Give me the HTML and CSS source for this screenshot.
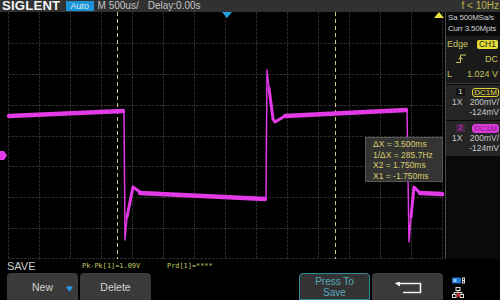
FILE: index.html
```html
<!DOCTYPE html>
<html>
<head>
<meta charset="utf-8">
<link rel="stylesheet" href="styles.css">
</head>
<body>
<div class="screen">
  <header class="topbar">
    <span class="logo">SIGLENT</span>
    <span class="mode">Auto</span>
    <span class="tb">M 500us/</span>
    <span class="tb delay">Delay:0.00s</span>
    <span class="freq">f &lt; 10Hz</span>
  </header>
  <div class="main">
    <div class="plot">
      <svg class="grid" width="445" height="247" viewBox="0 0 445 247">
        <g stroke="#2a2a2a" stroke-width="1" stroke-dasharray="3 1">
          <line x1="8.5" y1="0" x2="8.5" y2="247"/>
          <line x1="39.5" y1="0" x2="39.5" y2="247"/>
          <line x1="70.5" y1="0" x2="70.5" y2="247"/>
          <line x1="101.5" y1="0" x2="101.5" y2="247"/>
          <line x1="132.5" y1="0" x2="132.5" y2="247"/>
          <line x1="163.5" y1="0" x2="163.5" y2="247"/>
          <line x1="194.5" y1="0" x2="194.5" y2="247"/>
          <line x1="225.5" y1="0" x2="225.5" y2="247"/>
          <line x1="256.5" y1="0" x2="256.5" y2="247"/>
          <line x1="287.5" y1="0" x2="287.5" y2="247"/>
          <line x1="318.5" y1="0" x2="318.5" y2="247"/>
          <line x1="349.5" y1="0" x2="349.5" y2="247"/>
          <line x1="380.5" y1="0" x2="380.5" y2="247"/>
          <line x1="411.5" y1="0" x2="411.5" y2="247"/>
          <line x1="442.5" y1="0" x2="442.5" y2="247"/>
          <line x1="8" y1="31.5" x2="443" y2="31.5"/>
          <line x1="8" y1="62.5" x2="443" y2="62.5"/>
          <line x1="8" y1="93.5" x2="443" y2="93.5"/>
          <line x1="8" y1="124.5" x2="443" y2="124.5"/>
          <line x1="8" y1="154.5" x2="443" y2="154.5"/>
          <line x1="8" y1="185.5" x2="443" y2="185.5"/>
          <line x1="8" y1="216.5" x2="443" y2="216.5"/>
          <line x1="8" y1="246.5" x2="443" y2="246.5"/>
        </g>
        <g stroke="#c9c98a" stroke-width="1" stroke-dasharray="4 3">
          <line x1="117.5" y1="0" x2="117.5" y2="247"/>
          <line x1="335.5" y1="0" x2="335.5" y2="247"/>
        </g>
        <g fill="none" stroke="#e23ae6" stroke-linejoin="round" stroke-linecap="round">
          <line x1="9" y1="104" x2="123" y2="99" stroke-width="4.5"/>
          <path d="M124 99 L125 228 L127 205" stroke-width="1.5"/>
          <path d="M127 205 L133 175 L140 180" stroke-width="3"/>
          <line x1="140" y1="181" x2="265" y2="187" stroke-width="4.5"/>
          <path d="M266 187 L267 58 L269 76" stroke-width="1.5"/>
          <path d="M269 76 L273 107 L275 110 L285 104" stroke-width="3"/>
          <line x1="285" y1="104" x2="406" y2="98" stroke-width="4.5"/>
          <path d="M407 98 L409 230 L411 205" stroke-width="1.5"/>
          <path d="M411 205 L414 175 L420 181" stroke-width="3"/>
          <line x1="420" y1="181" x2="442" y2="182" stroke-width="4.5"/>
        </g>
        <polygon points="222,0 232,0 227,6" fill="#22a2e4"/>
        <polygon points="434,6 444,6 439,0" fill="#e8e23a"/>
        <polygon points="0,139 4,139 7,143.5 4,148 0,148" fill="#e23ae6"/>
        <rect x="440" y="182" width="4" height="2" fill="#e23ae6"/>
      </svg>
      <div class="cursor-box">
        <div>&Delta;X = 3.500ms</div>
        <div>1/&Delta;X = 285.7Hz</div>
        <div>X2 = 1.750ms</div>
        <div>X1 = -1.750ms</div>
      </div>
    </div>
    <aside class="panel">
      <div class="acq">
        <div>Sa 500MSa/s</div>
        <div>Curr 3.50Mpts</div>
      </div>
      <div class="trig">
        <div class="trow"><span>Edge</span><span class="ch1tag">CH1</span></div>
        <div class="trow">
          <svg class="slope" width="11" height="9" viewBox="0 0 11 9"><path d="M0 8.5 H4.5 V1 H10" fill="none" stroke="#cfc960" stroke-width="1"/><path d="M2.5 5.5 L4.5 3 L6.5 5.5" fill="none" stroke="#cfc960" stroke-width="1"/></svg>
          <span>DC</span>
        </div>
        <div class="trow"><span>L</span><span>1.024 V</span></div>
      </div>
      <div class="chan ch1">
        <div class="crow1"><span class="cnum">1</span><span class="cpl">DC1M</span></div>
        <div class="crow"><span>1X</span><span>200mV/</span></div>
        <div class="crow right"><span>-124mV</span></div>
      </div>
      <div class="chan ch2">
        <div class="crow1"><span class="cnum">2</span><span class="cpl">DC1M</span></div>
        <div class="crow"><span>1X</span><span>200mV/</span></div>
        <div class="crow right"><span>-124mV</span></div>
      </div>
    </aside>
  </div>
  <footer class="bottom">
    <div class="meas">
      <span class="menu-title">SAVE</span>
      <span class="mval pk">Pk-Pk[1]=1.09V</span>
      <span class="mval prd">Prd[1]=****</span>
    </div>
    <div class="buttons">
      <div class="btn new">New
        <svg class="knob" width="7" height="6" viewBox="0 0 7 6"><polygon points="0,1 7,1 3.5,6" fill="#2792e0"/><rect x="1.5" y="0" width="4" height="2" fill="#2792e0"/></svg>
      </div>
      <div class="btn">Delete</div>
      <div class="slot"></div>
      <div class="slot"></div>
      <div class="btn save">Press To<br>Save</div>
      <div class="btn back">
        <svg width="28" height="12" viewBox="0 0 28 12"><path d="M5 1.5 H26.5 V10.5 H9" fill="none" stroke="#f0f0f0" stroke-width="1.6"/><polygon points="1,1.5 6,-1.5 6,4.5" fill="#f0f0f0"/></svg>
      </div>
      <div class="status">
        <svg width="14" height="7" viewBox="0 0 14 7"><rect x="0" y="0.5" width="9" height="6" rx="1" fill="#1e78d8"/><rect x="1.5" y="2" width="3" height="3" fill="#9cc8f0"/><rect x="10" y="0.5" width="3" height="6" fill="#ddd"/><rect x="11" y="1.5" width="1" height="1.5" fill="#111"/><rect x="11" y="4" width="1" height="1.5" fill="#111"/></svg>
        <svg width="12" height="11" viewBox="0 0 12 11"><rect x="4" y="0.5" width="4" height="3" fill="none" stroke="#ddd" stroke-width="1"/><path d="M6 3.5 V5.5 M2 5.5 H10 M2 5.5 V7 M10 5.5 V7" stroke="#ddd" stroke-width="1" fill="none"/><rect x="0.5" y="7.5" width="3.5" height="3" fill="none" stroke="#ddd" stroke-width="1"/><rect x="8" y="7.5" width="3.5" height="3" fill="none" stroke="#ddd" stroke-width="1"/><path d="M5 6 L8 10" stroke="#e03030" stroke-width="1.3"/><path d="M8 6 L5 10" stroke="#e03030" stroke-width="1.3"/></svg>
      </div>
    </div>
  </footer>
</div>
</body>
</html>
```

FILE: styles.css
```css
* { box-sizing: border-box; }
html, body { margin: 0; padding: 0; background: #000; }
body {
  width: 500px;
  height: 300px;
  overflow: hidden;
  font-family: "Liberation Sans", Arial, sans-serif;
  color: #cfcfcf;
}
.screen { width: 500px; height: 300px; display: flex; flex-direction: column; }

.topbar {
  height: 12px;
  background: #313131;
  display: flex;
  align-items: center;
  font-size: 10px;
  line-height: 12px;
  white-space: nowrap;
}
.logo {
  margin-left: 2px;
  font-weight: bold;
  font-size: 12.5px;
  color: #f4f4f4;
  letter-spacing: 0.2px;
  transform: scaleX(1.05);
  transform-origin: left center;
}
.mode {
  margin-left: 8px;
  width: 28px;
  height: 10px;
  background: #1b93d6;
  color: #d8eefa;
  font-size: 9px;
  line-height: 10px;
  padding-left: 5px;
}
.tb { margin-left: 4px; color: #c4c4c4; }
.delay { margin-left: 9px; }
.freq { margin-left: auto; margin-right: 1px; color: #bdb648; }

.main { height: 247px; display: flex; }
.plot { position: relative; width: 445px; height: 247px; }
.grid { display: block; }

.cursor-box {
  position: absolute;
  left: 365px;
  top: 125px;
  width: 78px;
  height: 45px;
  background: rgba(58, 58, 56, 0.9);
  border: 1px solid #575757;
  color: #d6cc6e;
  font-size: 8.5px;
  line-height: 10.6px;
  padding: 1px 0 0 7px;
  white-space: nowrap;
}

.panel {
  width: 55px;
  height: 247px;
  border-left: 1px solid #4a4a4a;
  background: #0a0a0a;
  font-size: 8.5px;
  white-space: nowrap;
}
.acq {
  height: 24px;
  padding-left: 2px;
  line-height: 11px;
  color: #d0d0d0;
  font-size: 8px;
  letter-spacing: -0.2px;
  background: #0a0a0a;
}
.trig {
  height: 48px;
  padding-top: 1px;
  background: #1a1a1a;
  color: #cbc55c;
  border-bottom: 1px solid #3a3a3a;
}
.trow {
  height: 15px;
  display: flex;
  align-items: center;
  justify-content: space-between;
  padding: 0 1px 0 1px;
  font-size: 9px;
}
.trow:first-child { height: 14px; }
.trow .slope { margin-left: 9px; }
.trow span:last-child { margin-right: 1px; }
.ch1tag {
  background: #e4dd3e;
  color: #1a1a00;
  border-radius: 2px;
  font-size: 8.5px;
  line-height: 9px;
  padding: 0 2px;
}

.chan {
  height: 35px;
  background: #252525;
  margin-top: 1px;
  padding-top: 2px;
  color: #c8c8c8;
}
.crow1 {
  height: 10px;
  display: flex;
  align-items: center;
}
.cnum {
  margin-left: 10px;
  width: 9px;
  height: 8px;
  line-height: 8px;
  text-align: center;
  font-size: 8px;
  background: #151515;
  color: #ddd;
}
.cpl {
  margin-left: auto;
  margin-right: 1px;
  width: 27px;
  height: 9px;
  line-height: 8px;
  text-align: center;
  font-size: 8px;
  border: 1px solid #e0d83a;
  border-radius: 3px;
  color: #e0d83a;
}
.ch2 .cnum { background: #4a2448; color: #c43ac4; }
.ch2 .cpl { background: #d63ad6; border-color: #d63ad6; color: #8a1a8a; }
.crow {
  height: 10px;
  line-height: 11px;
  display: flex;
  justify-content: space-between;
  padding: 0 1px 0 6px;
}
.crow.right { justify-content: flex-end; }

.bottom { height: 41px; display: flex; flex-direction: column; }
.meas {
  height: 14px;
  display: flex;
  align-items: center;
  padding-left: 7px;
  white-space: nowrap;
}
.menu-title { font-size: 11px; color: #cfcfcf; width: 75px; }
.mval {
  font-family: "DejaVu Sans Mono", monospace;
  font-size: 6.9px;
  color: #c6cf6a;
}
.pk { width: 85px; }

.buttons {
  height: 27px;
  display: flex;
  gap: 2px;
  padding-left: 7px;
}
.btn, .slot { width: 71px; height: 27px; flex: none; }
.btn {
  background: #3a3a3a;
  border-radius: 4px 4px 0 0;
  display: flex;
  align-items: center;
  justify-content: center;
  font-size: 10.5px;
  color: #d2d2d2;
  position: relative;
}
.new .knob { position: absolute; right: 5px; top: 13px; }
.save {
  border: 1px solid #2b8a9c;
  color: #55aabd;
  font-size: 10px;
  line-height: 11px;
  text-align: center;
  background: #333;
}
.back { padding-top: 2px; }
.status {
  margin-left: 4px;
  display: flex;
  flex-direction: column;
  gap: 3px;
  padding: 4px 0 0 3px;
}
```
